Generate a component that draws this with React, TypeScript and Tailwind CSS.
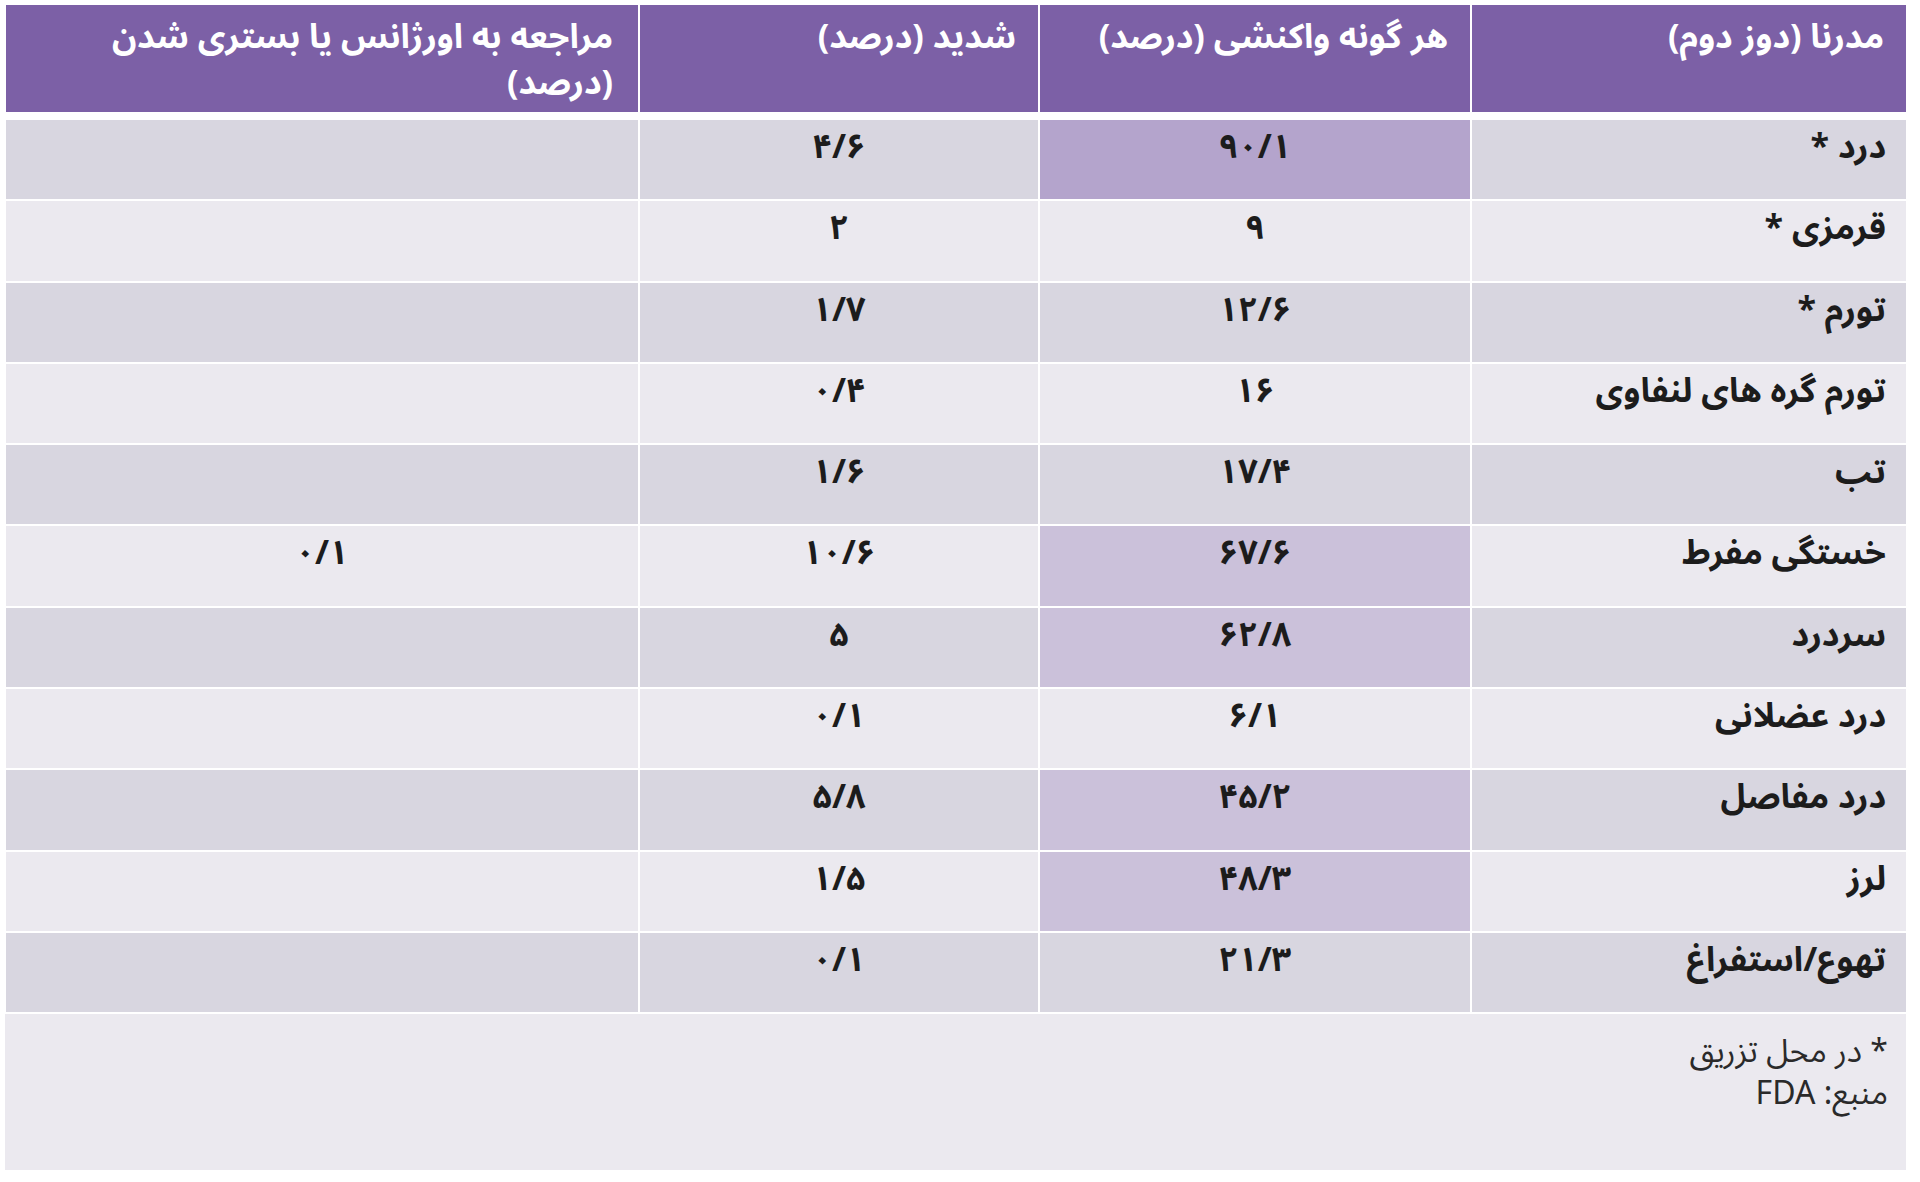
const font = { fontFamily: '"Noto Sans Arabic", "DejaVu Sans", "Noto Sans", sans-serif' };

type Row = {
  label: string;
  any: string;
  severe: string;
  er: string;
  hi?: 'strong' | 'soft';
};

const rows: Row[] = [
  { label: 'درد *', any: '۹۰/۱', severe: '۴/۶', er: '', hi: 'strong' },
  { label: 'قرمزی *', any: '۹', severe: '۲', er: '' },
  { label: 'تورم *', any: '۱۲/۶', severe: '۱/۷', er: '' },
  { label: 'تورم گره های لنفاوی', any: '۱۶', severe: '۰/۴', er: '' },
  { label: 'تب', any: '۱۷/۴', severe: '۱/۶', er: '' },
  { label: 'خستگی مفرط', any: '۶۷/۶', severe: '۱۰/۶', er: '۰/۱', hi: 'soft' },
  { label: 'سردرد', any: '۶۲/۸', severe: '۵', er: '', hi: 'soft' },
  { label: 'درد عضلانی', any: '۶/۱', severe: '۰/۱', er: '' },
  { label: 'درد مفاصل', any: '۴۵/۲', severe: '۵/۸', er: '', hi: 'soft' },
  { label: 'لرز', any: '۴۸/۳', severe: '۱/۵', er: '', hi: 'soft' },
  { label: 'تهوع/استفراغ', any: '۲۱/۳', severe: '۰/۱', er: '' },
];

const cols = 'grid grid-cols-[434px_430px_398px_632px] gap-x-[2px]';

export default function App() {
  return (
    <div className="w-full h-[1182px] bg-white pl-[5px] pr-[14px] pt-[5px]" style={font}>
      <div dir="rtl" className="w-[1901px] flex flex-col">
        {/* header */}
        <div className={`${cols} h-[107px]`}>
          {['مدرنا (دوز دوم)', 'هر گونه واکنشی (درصد)', 'شدید (درصد)', 'مراجعه به اورژانس یا بستری شدن (درصد)'].map((h, i) => (
            <div
              key={i}
              className={`bg-[#7c60a6] text-white font-bold text-[34px] leading-[46px] pt-[9px] text-right ${i === 3 ? 'pr-[25px] pl-[40px]' : 'pr-[22px]'}`}
            >
              {h}
            </div>
          ))}
        </div>

        <div className="h-[8px]" />

        <div className="flex flex-col gap-y-[2px]">
          {rows.map((r, idx) => {
            const base = idx % 2 === 0 ? 'bg-[#d8d6e0]' : 'bg-[#ebe9ef]';
            const hiBg = r.hi === 'strong' ? 'bg-[#b4a4cc]' : r.hi === 'soft' ? 'bg-[#cbc1da]' : base;
            return (
              <div key={idx} className={`${cols} h-[79.3px] text-[#1c1c1c] font-bold text-[34px] leading-[44px]`}>
                <div className={`${base} pr-[20px] pt-[5px] text-right`}>{r.label}</div>
                <div className={`${hiBg} pt-[5px] text-center`}>{r.any}</div>
                <div className={`${base} pt-[5px] text-center`}>{r.severe}</div>
                <div className={`${base} pt-[5px] text-center`}>{r.er}</div>
              </div>
            );
          })}
        </div>

        <div className="mt-[2px] h-[156px] bg-[#ebe9ef] pr-[18px] pt-[17px] text-[#2a2a2a] text-[32px] leading-[42px] text-right">
          <div>* در محل تزریق</div>
          <div>منبع: FDA</div>
        </div>
      </div>
    </div>
  );
}
